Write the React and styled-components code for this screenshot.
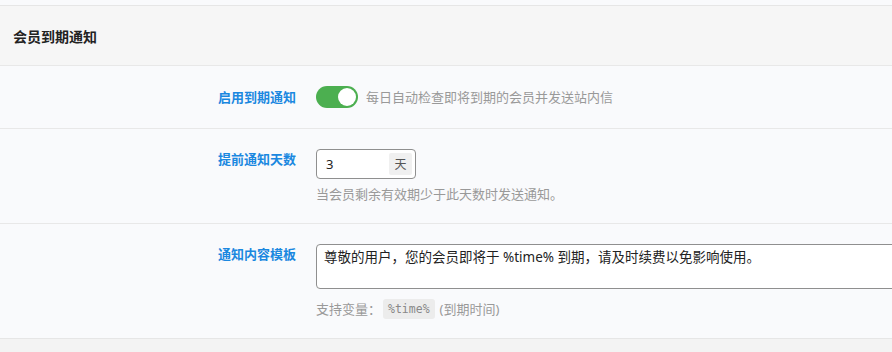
import React, { useState } from "react";
import styled, { createGlobalStyle } from "styled-components";

const GlobalStyle = createGlobalStyle`
  html, body {
    margin: 0;
    padding: 0;
    background: #f3f3f3;
    font-family: "Noto Sans", "Noto Sans CJK SC", sans-serif;
  }
`;

const Page = styled.div`
  width: 892px;
  height: 352px;
  overflow: hidden;
  background: #f3f3f3;
`;

const TopStrip = styled.div`
  height: 5px;
  background: #f9fafc;
`;

const Panel = styled.section`
  border-top: 1px solid #e6e6e6;
  border-bottom: 1px solid #e6e6e6;
  background: #f9fafc;
`;

const Header = styled.div`
  height: 59px;
  display: flex;
  align-items: center;
  padding-left: 13px;
  background: #f6f6f6;
  border-bottom: 1px solid #e8e8e8;
  font-size: 14px;
  font-weight: bold;
  color: #222;
`;

const Row = styled.div`
  display: grid;
  grid-template-columns: 296px 1fr;
  column-gap: 20px;
  padding: ${(p) => p.$pad || "20px 0"};
  border-top: ${(p) => (p.$first ? "0" : "1px solid #e8e8e8")};
  align-items: ${(p) => (p.$center ? "center" : "start")};
`;

const Label = styled.div`
  text-align: right;
  font-size: 13px;
  font-weight: bold;
  color: #1b88e0;
  line-height: 18px;
  padding-top: ${(p) => p.$top || "0"};
`;

const Control = styled.div`
  display: flex;
  flex-direction: column;
  align-items: flex-start;
  min-width: 0;
`;

const Inline = styled.div`
  display: flex;
  align-items: center;
  gap: 8px;
`;

const Track = styled.button`
  width: 42px;
  height: 22px;
  border: 0;
  padding: 0;
  border-radius: 11px;
  background: ${(p) => (p.$on ? "#4caf50" : "#ccc")};
  position: relative;
  cursor: pointer;
`;

const Knob = styled.span`
  position: absolute;
  top: 2px;
  left: ${(p) => (p.$on ? "22px" : "2px")};
  width: 18px;
  height: 18px;
  border-radius: 50%;
  background: #fff;
`;

const Desc = styled.span`
  font-size: 13px;
  color: #999;
  line-height: 18px;
`;

const NumberBox = styled.div`
  width: 100px;
  height: 30px;
  box-sizing: border-box;
  border: 1px solid #8f8f8f;
  border-radius: 4px;
  background: #fff;
  display: flex;
  align-items: center;
  padding: 0 3px 0 9px;
`;

const NumberInput = styled.input`
  flex: 1;
  min-width: 0;
  border: 0;
  outline: none;
  font-size: 13px;
  color: #222;
  font-family: inherit;
  padding: 0;
  background: transparent;
`;

const Addon = styled.span`
  width: 23px;
  height: 22px;
  display: flex;
  align-items: center;
  justify-content: center;
  background: #f0f0f0;
  border-radius: 2px;
  font-size: 12px;
  color: #555;
`;

const Help = styled.div`
  margin-top: ${(p) => p.$mt || "7px"};
  font-size: 13px;
  color: #999;
  line-height: 20px;
  display: flex;
  align-items: center;
`;

const Code = styled.code`
  font-family: "DejaVu Sans Mono", "Liberation Mono", monospace;
  font-size: 11.5px;
  background: #ececec;
  color: #888;
  border-radius: 3px;
  padding: 0 5px;
  height: 20px;
  line-height: 20px;
  margin: 0 5px 0 2px;
`;

const TextArea = styled.textarea`
  width: 600px;
  height: 45px;
  box-sizing: border-box;
  border: 1px solid #8f8f8f;
  border-radius: 4px;
  padding: 3px 7px;
  font-family: inherit;
  font-size: 13.5px;
  line-height: 18px;
  color: #222;
  resize: none;
  outline: none;
  background: #fff;
`;

export default function App() {
  const [on, setOn] = useState(true);
  const [days, setDays] = useState("3");
  const [tpl, setTpl] = useState(
    "尊敬的用户，您的会员即将于 %time% 到期，请及时续费以免影响使用。"
  );

  return (
    <>
      <GlobalStyle />
      <Page>
        <TopStrip />
        <Panel>
          <Header>会员到期通知</Header>
          <Row $first $center $pad="20px 0">
            <Label>启用到期通知</Label>
            <Inline>
              <Track $on={on} onClick={() => setOn(!on)}>
                <Knob $on={on} />
              </Track>
              <Desc>每日自动检查即将到期的会员并发送站内信</Desc>
            </Inline>
          </Row>
          <Row $pad="20px 0 19px">
            <Label $top="1px">提前通知天数</Label>
            <Control>
              <NumberBox>
                <NumberInput value={days} onChange={(e) => setDays(e.target.value)} />
                <Addon>天</Addon>
              </NumberBox>
              <Help $mt="5px">当会员剩余有效期少于此天数时发送通知。</Help>
            </Control>
          </Row>
          <Row $pad="20px 0 19px">
            <Label $top="1px">通知内容模板</Label>
            <Control>
              <TextArea value={tpl} onChange={(e) => setTpl(e.target.value)} />
              <Help $mt="10px">
                支持变量：<Code>%time%</Code>(到期时间)
              </Help>
            </Control>
          </Row>
        </Panel>
      </Page>
    </>
  );
}
